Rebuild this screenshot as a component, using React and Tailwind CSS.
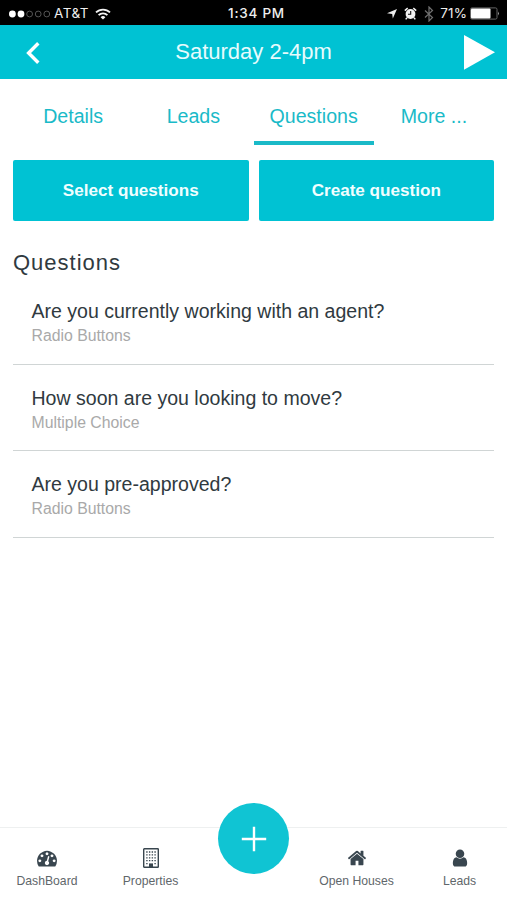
const tabs = ['Details', 'Leads', 'Questions', 'More ...'];

const questions = [
  { id: 1, text: 'Are you currently working with an agent?', type: 'Radio Buttons' },
  { id: 2, text: 'How soon are you looking to move?', type: 'Multiple Choice' },
  { id: 3, text: 'Are you pre-approved?', type: 'Radio Buttons' },
];

export default function App() {
  return (
    <main className="flex h-[900px] w-[507px] flex-col overflow-hidden bg-white font-['Liberation_Sans',Arial,sans-serif] text-[#303a3f]">
      <StatusBar />
      <Header title="Saturday 2-4pm" />
      <Tabs active="Questions" />

      <div className="mt-[15px] grid grid-cols-2 gap-2.5 px-[13px]">
        <ActionButton label="Select questions" />
        <ActionButton label="Create question" />
      </div>

      <section className="flex-1 px-[13px] pt-[29px]">
        <h2 className="text-[22px] leading-[26px] tracking-[1px]">Questions</h2>
        <ul className="pt-[2px]">
          {questions.map(q => (
            <li key={q.id} className="h-[86.67px] border-b border-[#d0d5d5] pt-[21px] pl-[18.5px]">
              <p className="text-[19.55px] leading-6">{q.text}</p>
              <p className="text-[15.8px] leading-[25px] text-[#a9a9a9]">{q.type}</p>
            </li>
          ))}
        </ul>
      </section>

      <BottomNav />
    </main>
  );
}

function StatusBar() {
  return (
    <div className="grid h-[25px] shrink-0 grid-cols-[1fr_auto_1fr] items-center bg-black pt-[2px] pr-[7px] pl-[9px] font-['Inter',sans-serif] text-[13.5px] text-[#eee]">
      <div className="flex items-center">
        <svg width="42" height="8" viewBox="0 0 42 8">
          <circle cx="3.4" cy="4" r="3.4" fill="#fff" />
          <circle cx="12" cy="4" r="3.4" fill="#fff" />
          <circle cx="20.6" cy="4" r="2.9" fill="none" stroke="#555" />
          <circle cx="29.2" cy="4" r="2.9" fill="none" stroke="#555" />
          <circle cx="37.8" cy="4" r="2.9" fill="none" stroke="#555" />
        </svg>
        <span className="ml-[3px] tracking-[0.5px]">AT&amp;T</span>
        <svg className="ml-[6px]" width="16" height="12" viewBox="0 0 16 12" fill="none" stroke="#f4f4f4" strokeWidth="1.8">
          <path d="M1 4.4a10 10 0 0 1 14 0" />
          <path d="M3.6 7.2a6.2 6.2 0 0 1 8.8 0" />
          <path d="M8 11.6L5.6 9.2a3.4 3.4 0 0 1 4.8 0z" fill="#f4f4f4" stroke="none" />
        </svg>
      </div>
      <span className="mr-[-4px] font-medium tracking-[0.75px]">1:34 PM</span>
      <div className="flex items-center justify-end">
        <svg width="10" height="10" viewBox="0 0 10 10" fill="#eee">
          <path d="M10 0L5.8 9.6L5.2 5L0 4.3z" />
        </svg>
        <svg className="ml-[7px]" width="13" height="13" viewBox="0 0 13 13">
          <path d="M.8 3.6L3.7 1.1M12.2 3.6L9.3 1.1M3 10.8L1.7 12.4M10 10.8l1.3 1.6" stroke="#f2f2f2" strokeWidth="1.5" />
          <circle cx="6.5" cy="7" r="4.9" fill="#f2f2f2" />
          <path d="M6.7 4.1v3.1H4" fill="none" stroke="#111" strokeWidth="1.1" />
        </svg>
        <svg className="ml-[7px]" width="10" height="16" viewBox="0 0 10 16" fill="none" stroke="#707070" strokeWidth="1.2">
          <path d="M1 4.5l7.5 7L5 15V1l3.5 3.5L1 11.5" />
        </svg>
        <span className="ml-[6px] tracking-[0.1px]">71%</span>
        <svg className="ml-[3px]" width="30" height="13" viewBox="0 0 30 13">
          <rect x=".5" y=".9" width="26.5" height="11.2" rx="1.5" fill="none" stroke="#666" />
          <rect x="1" y="1.4" width="19.5" height="10.2" rx="1" fill="#fff" />
          <path d="M28.2 4.6q1.5 1.9 0 3.8z" fill="#ddd" />
        </svg>
      </div>
    </div>
  );
}

function Header({ title }) {
  return (
    <header className="grid h-[54px] shrink-0 grid-cols-[1fr_auto_1fr] items-center bg-[#00c2d3] pr-[12px] pl-[26px] text-white">
      <svg className="mt-[2px]" width="14" height="22" viewBox="0 0 14 22" fill="none" stroke="#fff" strokeWidth="3.4">
        <path d="M12.3 1.2L2.6 11l9.7 9.8" />
      </svg>
      <h1 className="mr-[14px] text-[22px] leading-[54px] text-[#e6fbfd]">{title}</h1>
      <svg className="justify-self-end" width="31" height="35" viewBox="0 0 31 35" fill="#fff">
        <path d="M0 0l31 17.3L0 34.8z" />
      </svg>
    </header>
  );
}

function Tabs({ active }) {
  return (
    <nav className="grid h-[66px] shrink-0 grid-cols-4 px-[13px]">
      {tabs.map(tab => (
        <button
          key={tab}
          className={`border-b-4 pt-[13px] text-[19.6px] text-[#1abac8] ${tab === active ? 'border-[#1abac8]' : 'border-transparent'}`}
        >
          {tab}
        </button>
      ))}
    </nav>
  );
}

function ActionButton({ label }) {
  return (
    <button className="h-[61px] rounded-[2px] bg-[#00c2d3] text-[17.1px] font-bold text-[#f0feff]">
      {label}
    </button>
  );
}

function BottomNav() {
  return (
    <footer className="relative grid h-[73px] shrink-0 grid-cols-[94px_113px_94px_111px_95px] border-t border-[#eef0f0]">
      <NavItem label="DashBoard" icon={<DashboardIcon />} />
      <NavItem label="Properties" icon={<BuildingIcon />} />
      <span />
      <NavItem label="Open Houses" icon={<HomeIcon />} />
      <NavItem label="Leads" icon={<UserIcon />} />
      <button className="absolute -top-[25px] left-[218px] flex h-[71px] w-[71px] items-center justify-center rounded-full bg-[#10c4d3]">
        <svg width="26" height="26" viewBox="0 0 26 26" stroke="#fff" strokeWidth="2.4">
          <path d="M13 .8v24.4M.8 13h24.4" />
        </svg>
      </button>
    </footer>
  );
}

function NavItem({ label, icon }) {
  return (
    <div className="flex flex-col items-center pt-5 text-[#39464f]">
      {icon}
      <span className="mt-[5px] text-[12.2px] leading-4 whitespace-nowrap text-[#5f676b]">{label}</span>
    </div>
  );
}

function DashboardIcon() {
  return (
    <svg width="20" height="20" viewBox="0 0 1792 1792" fill="currentColor">
      <path d="M384 1152q0-53-37.5-90.5t-90.5-37.5-90.5 37.5-37.5 90.5 37.5 90.5 90.5 37.5 90.5-37.5 37.5-90.5zm192-448q0-53-37.5-90.5t-90.5-37.5-90.5 37.5-37.5 90.5 37.5 90.5 90.5 37.5 90.5-37.5 37.5-90.5zm428 481l101-382q6-26-7.5-48.5t-38.5-29.5-48 6.5-30 39.5l-101 382q-60 5-107 43.5t-63 98.5q-20 77 20 146t117 89 146-20 89-117q16-60-6-117t-72-91zm660-33q0-53-37.5-90.5t-90.5-37.5-90.5 37.5-37.5 90.5 37.5 90.5 90.5 37.5 90.5-37.5 37.5-90.5zm-640-640q0-53-37.5-90.5t-90.5-37.5-90.5 37.5-37.5 90.5 37.5 90.5 90.5 37.5 90.5-37.5 37.5-90.5zm448 192q0-53-37.5-90.5t-90.5-37.5-90.5 37.5-37.5 90.5 37.5 90.5 90.5 37.5 90.5-37.5 37.5-90.5zm320 448q0 261-141 483-19 29-54 29h-1402q-35 0-54-29-141-221-141-483 0-182 71-348t191-286 286-191 348-71 348 71 286 191 191 286 71 348z" />
    </svg>
  );
}

function BuildingIcon() {
  return (
    <svg width="20" height="20" viewBox="0 0 20 20" fill="none" stroke="currentColor">
      <rect x="2.7" y=".7" width="14.6" height="18.6" rx=".6" strokeWidth="1.4" />
      <path d="M5.2 4h9.6M5.2 6.9h9.6M5.2 9.8h9.6M5.2 12.7h9.6" strokeWidth="1.3" strokeDasharray="1.4 1.33" />
      <path d="M5.2 15.6h1.4M13.4 15.6h1.4" strokeWidth="1.3" />
      <path d="M8 19v-3.6h4V19z" fill="currentColor" stroke="none" />
    </svg>
  );
}

function HomeIcon() {
  return (
    <svg width="20" height="20" viewBox="-64 0 1792 1792" fill="currentColor">
      <path d="M1408 992v480q0 26-19 45t-45 19h-384v-384h-256v384h-384q-26 0-45-19t-19-45v-480q0-1 .5-3t.5-3l575-474 575 474q1 2 1 6zm223-69l-62 74q-8 9-21 11h-3q-13 0-21-7l-692-577-692 577q-12 8-24 7-13-2-21-11l-62-74q-8-10-7-23.5t11-21.5l719-599q32-26 76-26t76 26l244 204v-195q0-14 9-23t23-9h192q14 0 23 9t9 23v408l219 182q10 8 11 21.5t-7 23.5z" />
    </svg>
  );
}

function UserIcon() {
  return (
    <svg width="20" height="20" viewBox="0 0 1792 1792" fill="currentColor">
      <path d="M1536 1399q0 109-62.5 187t-150.5 78h-854q-88 0-150.5-78t-62.5-187q0-85 8.5-160.5t31.5-152 58.5-131 94-89 134.5-34.5q131 128 313 128t313-128q76 0 134.5 34.5t94 89 58.5 131 31.5 152 8.5 160.5zm-256-887q0 159-112.5 271.5t-271.5 112.5-271.5-112.5-112.5-271.5 112.5-271.5 271.5-112.5 271.5 112.5 112.5 271.5z" />
    </svg>
  );
}
